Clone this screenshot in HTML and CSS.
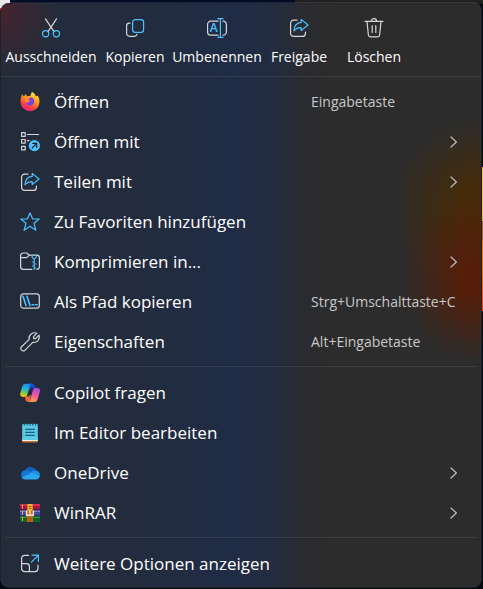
FILE: index.html
```
<!DOCTYPE html>
<html lang="de">
<head>
    <meta charset="UTF-8">
    <title>Kontextmenü</title>
    <link rel="stylesheet" href="styles.css">
</head>
<body>
    <svg class="defs" aria-hidden="true">
        <symbol id="share" viewBox="0 0 20 20">
            <path class="line" d="M8 2.2H4.6A3 3 0 0 0 1.6 5.2V15.4A3 3 0 0 0 4.6 18.4H13.4A3 3 0 0 0 16.4 15.4V14"/>
            <path class="line blue" d="M12.2 1.4L19 7L12.2 12.6V9.6C9 9.6 6.8 10.4 5 12.8C5.2 8 8 4.7 12.2 4.4Z"/>
        </symbol>
        <symbol id="chevron" viewBox="0 0 10 14">
            <path class="line" d="M2 2L7.4 7L2 12"/>
        </symbol>
    </svg>
    <div class="menu">
        <div class="toolbar">
            <button class="tool">
                <svg class="icon" viewBox="0 0 20 20">
                    <path class="line" d="M4.5 .8L13 13.6M15.5 .8L7 13.6"/>
                    <circle class="line blue" cx="4.6" cy="15.8" r="3.1"/>
                    <circle class="line blue" cx="15.4" cy="15.8" r="3.1"/>
                </svg>
                <span>Ausschneiden</span>
            </button>
            <button class="tool">
                <svg class="icon" viewBox="0 0 20 20">
                    <path class="line" d="M5 5.2H4.3A2.7 2.7 0 0 0 1.6 7.9V15.3A3 3 0 0 0 4.6 18.3H9.2A2.8 2.8 0 0 0 12 16.4"/>
                    <rect class="line blue" x="7.6" y="1.6" width="11" height="12.8" rx="2.6"/>
                </svg>
                <span>Kopieren</span>
            </button>
            <button class="tool">
                <svg class="icon" viewBox="0 0 20 20" aria-hidden="true">
                    <path class="line" d="M11 3.2H3.6A3 3 0 0 0 .6 6.2V14.2A3 3 0 0 0 3.6 17.2H11M16 3.2A3.2 3.2 0 0 1 19.4 6.2V14.2A3.2 3.2 0 0 1 16 17.2"/>
                    <path class="line blue" d="M10.8 .7H16M13.4 .7V19.3M10.8 19.3H16"/>
                    <text class="letter" x="6.8" y="14.4">A</text>
                </svg>
                <span>Umbenennen</span>
            </button>
            <button class="tool">
                <svg class="icon"><use href="#share"/></svg>
                <span>Freigabe</span>
            </button>
            <button class="tool">
                <svg class="icon" viewBox="0 0 20 20">
                    <path class="line" d="M1 3.4H19M7.4 3.2A2.6 2.6 0 0 1 12.6 3.2M3 3.6L4.4 17A2 2 0 0 0 6.4 18.9H13.6A2 2 0 0 0 15.6 17L17 3.6M8.2 7.6V14.4M11.8 7.6V14.4"/>
                </svg>
                <span>Löschen</span>
            </button>
        </div>

        <ul class="group">
            <li><button class="item">
                <svg class="icon" viewBox="0 0 20 20">
                    <defs>
                        <linearGradient id="fox" x1=".8" y1="0" x2=".3" y2="1">
                            <stop offset="0" stop-color="#fff044"/>
                            <stop offset=".4" stop-color="#ff9a22"/>
                            <stop offset=".7" stop-color="#ff4838"/>
                            <stop offset="1" stop-color="#e5178a"/>
                        </linearGradient>
                    </defs>
                    <path fill="url(#fox)" d="M12.2 0C15 1.4 15.4 3.4 15.9 4.2C17.2 3.8 17.7 3.4 17.9 4C19.2 6 19.6 8 19.4 10.4A9.4 8.8 0 0 1 .6 10.4C.3 7.4 1 4.4 2.3 2.2L3.7 4.4L6 1.9L6.8 4.4C8.4 3.8 9.4 4 10.4 4.1C10.6 2.2 11.3 1 12.2 0Z"/>
                    <path fill="#7a3fe0" d="M10 5.4C13 5.2 14.6 7.4 14.2 10.2A4.4 4.2 0 0 1 5.7 10.4C6.6 10.8 8.4 10.5 9.4 9.4C8 8.9 7 8.6 7 7.8C8.2 7.6 9.2 7 10 5.4Z"/>
                    <path fill="#ff8a24" d="M4.6 7.4C5.8 6.6 7 7 8 7.4C8.8 7.8 10.5 7.8 10.5 8.4C10 9.4 8.8 9.2 8 9.9C7.2 10.8 6.2 10.8 5.4 10.4Z"/>
                </svg>
                <span>Öffnen</span>
                <kbd>Eingabetaste</kbd>
            </button></li>
            <li><button class="item">
                <svg class="icon" viewBox="0 0 20 20">
                    <path class="line" d="M1.6 .7H5.2V4.3H1.6ZM1.6 7.5H5.2V11.1H1.6ZM1.6 14.3H5.2V17.9H1.6ZM7.4 2.5H18.6M7.4 8.6H9"/>
                    <circle class="fill-blue" cx="14.4" cy="13.6" r="5.6"/>
                    <path class="line dark" d="M12.2 15.8L16.4 11.6M12.8 11.3H16.7V15.2"/>
                </svg>
                <span>Öffnen mit</span>
                <svg class="chevron"><use href="#chevron"/></svg>
            </button></li>
            <li><button class="item">
                <svg class="icon"><use href="#share"/></svg>
                <span>Teilen mit</span>
                <svg class="chevron"><use href="#chevron"/></svg>
            </button></li>
            <li><button class="item">
                <svg class="icon" viewBox="0 0 20 20">
                    <path class="line blue" d="M10 .9L12.7 7H19.2L14 11.3L15.9 18.3L10 14.3L4.1 18.3L6 11.3L.8 7H7.3Z"/>
                </svg>
                <span>Zu Favoriten hinzufügen</span>
            </button></li>
            <li><button class="item">
                <svg class="icon" viewBox="0 0 20 20">
                    <path class="line" d="M11.8 17.4H3.2A2.6 2.6 0 0 1 .6 14.8V3.6A2.6 2.6 0 0 1 3.2 1H6.8L9.4 3.2H16.8A2.6 2.6 0 0 1 19.4 5.8V14.8A2.6 2.6 0 0 1 17 17.4M.6 5.6H6.6L9.4 3.2"/>
                    <path class="line blue" d="M12.2 3.4V5.4L14.2 7.4L16.2 5.4V3.4M14.2 7.4V17.4M14.2 10H12.4M14.2 12H16M14.2 14H12.4M14.2 16H16"/>
                </svg>
                <span>Komprimieren in...</span>
                <svg class="chevron"><use href="#chevron"/></svg>
            </button></li>
            <li><button class="item">
                <svg class="icon" viewBox="0 0 20 20">
                    <rect class="line" x=".7" y="1.8" width="18.6" height="14.4" rx="2.8"/>
                    <path class="line blue thick" d="M3 4.2L6 13.6M7 4.2L10 13.6M12.2 12.8H13.8M15.6 12.8H17.2"/>
                </svg>
                <span>Als Pfad kopieren</span>
                <kbd>Strg+Umschalttaste+C</kbd>
            </button></li>
            <li><button class="item">
                <svg class="icon" viewBox="0 0 20 20">
                    <path class="line" d="M17 1.2L13.6 4.6V6.6H15.6L19 3.2C20.2 7.4 17.2 10.9 12.8 10.3L5 18.2C2.6 20.2-.6 17 1.5 14.7L9.2 7.4C8.4 2.9 12.6-.4 17 1.2Z"/>
                </svg>
                <span>Eigenschaften</span>
                <kbd>Alt+Eingabetaste</kbd>
            </button></li>
        </ul>

        <ul class="group">
            <li><button class="item">
                <svg class="icon" viewBox="0 0 20 20">
                    <defs>
                        <linearGradient id="cool" x1=".6" y1="0" x2=".3" y2="1">
                            <stop offset="0" stop-color="#1b8df0"/>
                            <stop offset=".45" stop-color="#27b8c8"/>
                            <stop offset=".75" stop-color="#8ccb3c"/>
                            <stop offset="1" stop-color="#ffc400"/>
                        </linearGradient>
                        <linearGradient id="warm" x1=".7" y1="0" x2=".4" y2="1">
                            <stop offset="0" stop-color="#a54bea"/>
                            <stop offset=".5" stop-color="#f2559c"/>
                            <stop offset="1" stop-color="#ffa04e"/>
                        </linearGradient>
                    </defs>
                    <path fill="#1549c9" d="M9 .8H12.4C14 .8 14.6 2 15 3.2L15.6 5H12C10 5 9.6 7 9.2 8.2Z"/>
                    <path fill="#f0663c" d="M5 13.5H8.8L11 11L9.6 18.8H7.6C6.2 18.8 5.6 17.6 5.2 16Z"/>
                    <path fill="url(#cool)" d="M5.8 .8H12.2C10.8 1 10.2 2.2 9.8 3.6L7.4 11.4C6.8 13.2 6 13.9 4.4 13.9H2.8C.4 13.9-.2 12.2.4 9.8L2.3 3.6C3 1.4 4 .8 5.8 .8Z"/>
                    <path fill="url(#warm)" d="M15 5H17.2C19.6 5 20.4 6.6 19.8 9L17.7 15.9C17 18.1 16 18.9 14.2 18.9H8.2C9.4 18.7 10 17.8 10.4 16.2L12.7 8C13.2 6 13.6 5 15 5Z"/>
                </svg>
                <span>Copilot fragen</span>
            </button></li>
            <li><button class="item">
                <svg class="icon" viewBox="0 0 20 20">
                    <path fill="#c8722c" d="M2.2 17H17.8V18.4Q17.8 19.4 16.8 19.4H3.2Q2.2 19.4 2.2 18.4Z"/>
                    <path fill="#f1f4f4" d="M2.2 15H17.8V18H2.2Z"/>
                    <path fill="#5cc8e4" d="M3 .9H17Q17.8 .9 17.8 1.8V17H2.2V1.8Q2.2 .9 3 .9Z"/>
                    <path stroke="#15566f" stroke-width="1.2" d="M4.4 0V2.6M7.2 0V2.6M10 0V2.6M12.8 0V2.6M15.6 0V2.6"/>
                    <path stroke="#12657f" stroke-width="1.3" d="M5.2 6.4H14.8M5.2 9.4H14.8M5.2 12.4H14.8"/>
                </svg>
                <span>Im Editor bearbeiten</span>
            </button></li>
            <li><button class="item">
                <svg class="icon" viewBox="0 0 20 20">
                    <path fill="#0d62bd" d="M5 7.8A6 6 0 0 1 16 7.6L12 12L5 10Z"/>
                    <path fill="#1277d6" d="M5.2 7.2C8 6.8 10 8.2 12.6 9.8L4.6 16.2A4.6 4.6 0 0 1 5.2 7.2Z"/>
                    <path fill="#1a8fe6" d="M11 9.4C12.6 7.8 14.4 7.2 16.2 7.6C18.8 8.4 20 10 19.9 12.2L14 13Z"/>
                    <path fill="#29a7ee" d="M1.8 14.6L11.8 9.8L19.9 12.4A3.9 3.9 0 0 1 16 16.4H5C3.6 16.4 2.6 15.8 1.8 14.6Z"/>
                </svg>
                <span>OneDrive</span>
                <svg class="chevron"><use href="#chevron"/></svg>
            </button></li>
            <li><button class="item">
                <svg class="icon" viewBox="0 0 20 20">
                    <path fill="#a3153f" d="M0 1H20V7H0Z"/>
                    <path fill="#d92a5a" d="M0 1H20V3H0Z"/>
                    <path fill="#4148a0" d="M0 7H20V13H0Z"/>
                    <path fill="#777ecb" d="M0 7.4H20V9H0Z"/>
                    <path fill="#11602c" d="M0 13H20V19H0Z"/>
                    <path fill="#269645" d="M0 13.4H20V15H0Z"/>
                    <path stroke="#291b35" stroke-width=".8" d="M0 6.8H20M0 12.8H20"/>
                    <path stroke="#f0ad36" d="M2.5 1.6V5.8M2.5 7.8V11.8M2.5 13.8V18"/>
                    <path fill="#c56617" d="M7 1H13V19H7Z"/>
                    <path fill="#f3b538" d="M7.6 1H12.4V8H7.6Z"/>
                    <path fill="none" stroke="#eee5cc" stroke-width="1.4" d="M6.6 7.6V12.2H13.4V7.6M10 8V12"/>
                    <path stroke="#8c3d0e" stroke-width=".8" d="M8.6 3.4H11.4M8.6 5.4H11.4M8.6 15H11.4M8.6 17H11.4"/>
                </svg>
                <span>WinRAR</span>
                <svg class="chevron"><use href="#chevron"/></svg>
            </button></li>
        </ul>

        <ul class="group">
            <li><button class="item">
                <svg class="icon" viewBox="0 0 20 20">
                    <path class="line" d="M8.6 1.4H4.6A3 3 0 0 0 1.6 4.4V14.6A3 3 0 0 0 4.6 17.6H15A3 3 0 0 0 18 14.6V11M1.6 9.6H6.6A2.8 2.8 0 0 1 9.4 12.4V17.6"/>
                    <path class="line blue" d="M11.4 8.2L18.2 1.4M12 1.2H18.4V7.6"/>
                </svg>
                <span>Weitere Optionen anzeigen</span>
            </button></li>
        </ul>
    </div>
</body>
</html>
```

FILE: styles.css
```
* {
    margin: 0;
    padding: 0;
    box-sizing: border-box;
}
body {
    min-height: 100vh;
    padding: 2px 1px 1px 0;
    font-family: "Segoe UI", "Open Sans", sans-serif;
    /* desktop behind the menu */
    background:
        linear-gradient(#e8e8ee 8px, #d0101c 8px 10px, transparent 10px) 0 0 / 10px 12px no-repeat,
        linear-gradient(transparent 167px, #f2bd50 167px 221px, #b06a20 221px 240px, #f07818 240px 270px, #e8480c 311px, transparent 311px) 100% 0 / 1px 100% no-repeat,
        linear-gradient(90deg, #030c24 0 295px, #202020 295px) 0 0 / 100% 4px no-repeat,
        #06090f;
}
button {
    border: none;
    background: none;
    color: inherit;
    font: inherit;
}
.defs {
    display: none;
}
.menu {
    border: 1px solid rgba(255, 255, 255, 0.1);
    border-radius: 9px;
    padding-bottom: 3px;
    color: #fff;
    background:
        radial-gradient(circle at 0 8px, #45232e, transparent 60px),
        radial-gradient(ellipse 80px 85px at 100% 275px, #561e08 20%, transparent),
        radial-gradient(ellipse 90px 90px at 100% 205px, #452b0a 25%, transparent),
        linear-gradient(90deg, #242c3a 0%, #222c3e 30%, #202c46 48%, #222c40 56%, #2a2b2f 64%, #2c2c2c 70%);
    background-color: #2c2c2c;
    background-clip: padding-box;
}
.toolbar {
    display: grid;
    grid-template-columns: 100px 68px 96px 68px 82px;
    height: 74px;
    padding-top: 15px;
    border-bottom: 1px solid rgba(255, 255, 255, 0.09);
    margin-bottom: 5px;
}
.tool {
    display: flex;
    flex-direction: column;
    align-items: center;
    gap: 9px;
    font-size: 14px;
    line-height: 20px;
    white-space: nowrap;
}
.icon {
    width: 20px;
    height: 20px;
    flex: none;
}
.group {
    list-style: none;
}
.group + .group::before {
    content: "";
    display: block;
    height: 1px;
    margin: 4px 4px 6px;
    background: rgba(255, 255, 255, 0.09);
}
.item {
    display: grid;
    grid-template-columns: 20px 1fr 150px;
    align-items: center;
    column-gap: 14px;
    width: 100%;
    height: 40px;
    padding: 0 20px 0 19px;
    font-size: 17px;
    text-align: left;
    white-space: nowrap;
}
.item span,
.item kbd {
    padding-bottom: 2px;
}
.item kbd {
    font-family: inherit;
    font-size: 14px;
    color: #c8c8c8;
}
.chevron {
    width: 10px;
    height: 14px;
    margin-right: 2px;
    justify-self: end;
    opacity: 0.85;
}
.line {
    fill: none;
    stroke: #d4d6da;
    stroke-width: 1.2;
    stroke-linecap: round;
    stroke-linejoin: round;
}
.blue {
    stroke: #4cc2ff;
}
.fill-blue {
    fill: #4cc2ff;
}
.dark {
    stroke: #101820;
}
.thick {
    stroke-width: 1.6;
}
.letter {
    fill: #4cc2ff;
    font-size: 12px;
    font-weight: 600;
    text-anchor: middle;
}
```
